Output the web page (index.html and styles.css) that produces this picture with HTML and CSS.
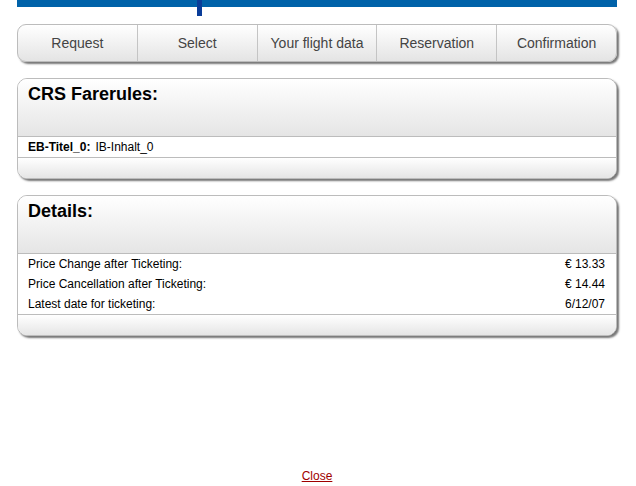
FILE: index.html
```html
<!DOCTYPE html>
<html>
<head>
<meta charset="utf-8">
<link rel="stylesheet" href="styles.css">
</head>
<body>
<div class="page">
  <div class="topbar"><span class="tick"></span></div>
  <nav class="steps">
    <div class="step">Request</div>
    <div class="step">Select</div>
    <div class="step">Your flight data</div>
    <div class="step">Reservation</div>
    <div class="step">Confirmation</div>
  </nav>
  <section class="panel">
    <div class="panel-head"><h2>CRS Farerules:</h2></div>
    <div class="panel-body">
      <div class="row"><span class="key">EB-Titel_0:</span><span>IB-Inhalt_0</span></div>
    </div>
    <div class="panel-foot"></div>
  </section>
  <section class="panel">
    <div class="panel-head"><h2>Details:</h2></div>
    <div class="panel-body">
      <div class="row split"><span>Price Change after Ticketing:</span><span>€ 13.33</span></div>
      <div class="row split"><span>Price Cancellation after Ticketing:</span><span>€ 14.44</span></div>
      <div class="row split"><span>Latest date for ticketing:</span><span>6/12/07</span></div>
    </div>
    <div class="panel-foot"></div>
  </section>
  <div class="close"><a href="#">Close</a></div>
</div>
</body>
</html>
```
FILE: styles.css
```css
html, body {
  margin: 0;
  padding: 0;
  background: #fff;
  font-family: "Liberation Sans", Arial, sans-serif;
  color: #000;
}
.page {
  width: 600px;
  margin-left: 17px;
}
.topbar {
  position: relative;
  height: 7px;
  background: #0062a9;
}
.tick {
  position: absolute;
  left: 180px;
  top: 0;
  width: 5px;
  height: 16px;
  background: #0a3d99;
}
.steps {
  margin-top: 17px;
  display: flex;
  height: 36px;
  border: 1px solid #bcbcbc;
  border-radius: 9px;
  background: linear-gradient(#ffffff, #e4e4e4);
  box-shadow: 2px 2px 2px #777;
  overflow: hidden;
}
.step {
  flex: 1;
  display: flex;
  align-items: center;
  justify-content: center;
  font-size: 14px;
  color: #444;
  border-left: 1px solid #c4c4c4;
}
.step:first-child { border-left: none; }
.panel {
  margin-top: 16px;
  border: 1px solid #bcbcbc;
  border-radius: 10px;
  box-shadow: 2px 2px 2px #777;
  overflow: hidden;
  background: #fff;
}
.panel-head {
  height: 58px;
  background: linear-gradient(#ffffff, #e5e5e5);
  border-bottom: 1px solid #bcbcbc;
  padding: 4px 10px 0;
  box-sizing: border-box;
}
.panel-head h2 {
  margin: 0;
  font-size: 18px;
  font-weight: bold;
  line-height: 22px;
}
.panel-body {
  padding: 0 11px 0 10px;
}
.row {
  display: flex;
  height: 20px;
  align-items: center;
  font-size: 12px;
  gap: 5px;
}
.row .key { font-weight: bold; }
.row.split { justify-content: space-between; }
.panel-foot {
  height: 20px;
  border-top: 1px solid #bcbcbc;
  background: linear-gradient(#ffffff, #e5e5e5);
}
.close {
  margin-top: 133px;
  line-height: 14px;
  text-align: center;
  font-size: 12px;
}
.close a {
  color: #a00000;
  text-decoration: underline;
}
```
